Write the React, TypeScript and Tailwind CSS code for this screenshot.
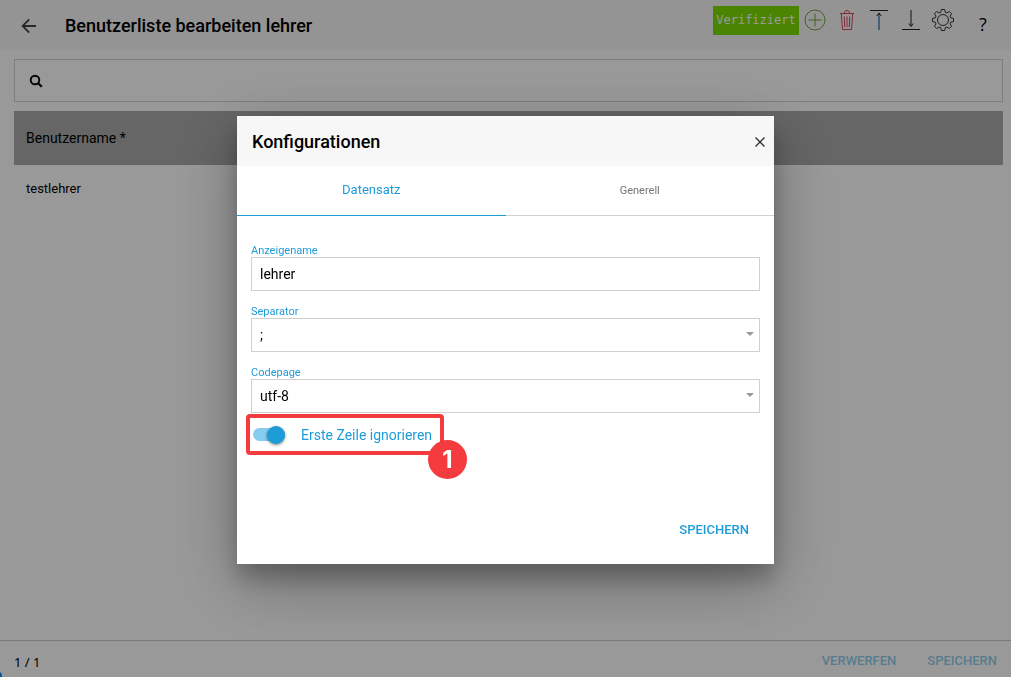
import { useState } from 'react'
import type { ReactNode } from 'react'

export default function App() {
  return (
    <div className="flex min-h-screen flex-col bg-white font-[Roboto,sans-serif] text-black">
      <TopBar />
      <main className="flex-1 pr-2 pl-3.5">
        <SearchField />
        <UserTable />
      </main>
      <Footer />
      <ConfigDialog />
    </div>
  )
}

function TopBar() {
  return (
    <header className="flex h-[50px] items-center justify-between bg-[#f7f7f7] pl-5">
      <div className="flex items-center gap-7 pt-0.5">
        <button type="button" aria-label="Zurück">
          <svg width="17" height="16" viewBox="0 0 17 16" fill="none" stroke="#444" strokeWidth="1.8">
            <path d="M16 8H3M9.2 1.3 2.6 8l6.6 6.7" />
          </svg>
        </button>
        <h1 className="text-lg font-medium">Benutzerliste bearbeiten lehrer</h1>
      </div>
      <div className="flex items-center pb-2.5">
        <button
          type="button"
          className="mr-1 h-[29px] w-[86px] bg-[#7cdc00] font-['DejaVu_Sans_Mono',monospace] text-xs text-white"
        >
          Verifiziert
        </button>
        <div className="flex items-center gap-2">
          <IconButton label="Hinzufügen">
            <g stroke="#72a53a">
              <circle cx="12" cy="12" r="10" />
              <path d="M12 5.5v13M5.5 12h13" />
            </g>
          </IconButton>
          <IconButton label="Löschen">
            <g stroke="#d9485c">
              <path d="M5 5.5h14M9.5 5q0-2.5 2.5-2.5T14.5 5M6.3 6l1.2 15.5h9L17.7 6" />
              <path d="m9.3 8.5.4 10.5M12 8.5V19M14.7 8.5 14.3 19" />
            </g>
          </IconButton>
          <IconButton label="Importieren">
            <path d="M3 2.5h18" stroke="#222" />
            <path d="M12 5v17" stroke="#3a78b8" strokeWidth="1.4" />
            <path d="M9.8 8 12 5l2.2 3" stroke="#222" />
          </IconButton>
          <IconButton label="Exportieren">
            <path d="M3 21.5h18" stroke="#222" />
            <path d="M12 2v16" stroke="#444" strokeWidth="1.2" />
            <path d="M9.8 15.5 12 18.5l2.2-3" stroke="#222" />
          </IconButton>
          <IconButton label="Einstellungen">
            <g stroke="#333" strokeLinejoin="round">
              <circle cx="12" cy="12" r="5.5" />
              <path d="M10.3 1.5h3.4l.5 2.8 1.7.7 2.3-1.6 2.4 2.4L19 8.1l.7 1.7 2.8.5v3.4l-2.8.5-.7 1.7 1.6 2.3-2.4 2.4-2.3-1.6-1.7.7-.5 2.8h-3.4l-.5-2.8-1.7-.7-2.3 1.6-2.4-2.4L5 15.9l-.7-1.7-2.8-.5v-3.4l2.8-.5L5 8.1 3.4 5.8l2.4-2.4L8.1 5l1.7-.7z" />
            </g>
          </IconButton>
        </div>
        <button type="button" className="mt-2 w-14 font-['Open_Sans',sans-serif] text-lg">
          ?
        </button>
      </div>
    </header>
  )
}

function IconButton({ label, children }: { label: string; children: ReactNode }) {
  return (
    <button type="button" aria-label={label}>
      <svg width="24" height="24" viewBox="0 0 24 24" fill="none">
        {children}
      </svg>
    </button>
  )
}

function SearchField() {
  return (
    <label className="mt-[9px] flex h-[43px] items-center gap-2 border border-[#d3d3d3] px-3.5">
      <svg width="14" height="14" viewBox="0 0 14 14" fill="none" stroke="#000" strokeWidth="1.9">
        <circle cx="6" cy="6" r="4.3" />
        <path d="m9.2 9.2 3.6 3.6" strokeWidth="2.3" />
      </svg>
      <input type="search" aria-label="Suchen" className="flex-1 text-sm outline-none" />
    </label>
  )
}

function UserTable() {
  return (
    <table className="mt-[9px] w-full text-left">
      <thead>
        <tr className="h-[54px] bg-[#aaa]">
          <th className="px-3 text-sm font-normal">Benutzername *</th>
        </tr>
      </thead>
      <tbody>
        <tr className="h-12">
          <td className="px-3 text-[13px]">testlehrer</td>
        </tr>
      </tbody>
    </table>
  )
}

function Footer() {
  return (
    <footer className="relative flex h-[37px] items-center justify-between overflow-hidden border-t border-[#ccc] px-3.5">
      <span className="pt-2 font-['Noto_Sans',sans-serif] text-[13px]">1 / 1</span>
      <div className="flex gap-[31px] pt-1 text-[13px] font-medium text-[#1e9cd8]/50">
        <button type="button">VERWERFEN</button>
        <button type="button">SPEICHERN</button>
      </div>
      <span className="absolute -bottom-1 -left-2 size-2.5 rounded-full bg-[#0a84ff]" />
    </footer>
  )
}

function ConfigDialog() {
  const [name, setName] = useState('lehrer')
  const [ignoreFirst, setIgnoreFirst] = useState(true)

  return (
    <div className="fixed inset-0 flex items-start justify-center bg-black/40 pt-29">
      <div
        role="dialog"
        aria-labelledby="dialog-title"
        className="w-full max-w-[537px] bg-white shadow-[0_19px_60px_rgba(0,0,0,0.3),0_15px_20px_rgba(0,0,0,0.22)]"
      >
        <div className="flex h-[50px] items-center justify-between bg-[#f7f7f7] pt-0.5 pr-2 pl-[15px]">
          <h2 id="dialog-title" className="text-lg font-medium">
            Konfigurationen
          </h2>
          <button type="button" aria-label="Schließen">
            <svg width="12" height="12" viewBox="0 0 12 12" fill="none" stroke="#333" strokeWidth="1.4">
              <path d="m1.5 1.5 9 9m0-9-9 9" />
            </svg>
          </button>
        </div>

        <div role="tablist" className="grid h-[50px] grid-cols-2">
          <button
            type="button"
            role="tab"
            aria-selected="true"
            className="border-b border-[#1e9cd8] pb-0.5 text-[13px] text-[#1e9cd8]"
          >
            Datensatz
          </button>
          <button
            type="button"
            role="tab"
            aria-selected="false"
            className="border-b border-[#d0d0d0] pt-0.5 text-[11px] text-[#757575]"
          >
            Generell
          </button>
        </div>

        <div className="px-3.5 pt-7">
          <div className="flex flex-col gap-3.5">
            <Field id="name" label="Anzeigename">
              <input
                id="name"
                value={name}
                onChange={(e) => setName(e.target.value)}
                className="h-[34px] w-full border border-[#d0d0d0] px-2 text-sm"
              />
            </Field>
            <Field id="separator" label="Separator">
              <Select id="separator" options={[';', ',']} />
            </Field>
            <Field id="codepage" label="Codepage">
              <Select id="codepage" options={['utf-8', 'iso-8859-1']} />
            </Field>
          </div>

          <div className="relative -ml-[5px] mt-px h-[41px] w-[198px] rounded-sm border-4 border-[#f53b3e]">
            <label className="flex h-full items-center gap-4 pl-[3px] text-sm whitespace-nowrap text-[#1e9cd8]">
              <span className="relative flex h-[18px] w-8 items-center">
                <input
                  type="checkbox"
                  checked={ignoreFirst}
                  onChange={(e) => setIgnoreFirst(e.target.checked)}
                  className="peer h-[13px] w-8 appearance-none rounded-full bg-[#bbb] checked:bg-[#86cdf0]"
                />
                <span className="pointer-events-none absolute left-0 size-[18px] rounded-full bg-[#1e9cd8] shadow-[0_1px_3px_rgba(0,0,0,0.5)] peer-checked:left-3.5" />
              </span>
              Erste Zeile ignorieren
            </label>
            <span className="absolute -right-[27px] -bottom-7 flex size-[39px] items-center justify-center rounded-full bg-[#f53b3e] font-[Inter,sans-serif] text-2xl font-bold text-white">
              1
            </span>
          </div>
        </div>

        <div className="flex justify-end px-[25px] pt-[65px] pb-6">
          <button type="button" className="text-[13px] leading-5 font-medium text-[#1e9cd8]">
            SPEICHERN
          </button>
        </div>
      </div>
    </div>
  )
}

function Field({ id, label, children }: { id: string; label: string; children: ReactNode }) {
  return (
    <div className="flex flex-col">
      <label htmlFor={id} className="text-[11px] leading-[13px] text-[#1e9cd8]">
        {label}
      </label>
      {children}
    </div>
  )
}

function Select({ id, options }: { id: string; options: string[] }) {
  return (
    <div className="relative">
      <select id={id} className="h-[34px] w-full appearance-none border border-[#d0d0d0] bg-white px-2 text-sm">
        {options.map((option) => (
          <option key={option}>{option}</option>
        ))}
      </select>
      <svg className="pointer-events-none absolute top-3.5 right-1.5" width="8" height="4" viewBox="0 0 8 4" fill="#999">
        <path d="M0 0h8L4 4z" />
      </svg>
    </div>
  )
}
